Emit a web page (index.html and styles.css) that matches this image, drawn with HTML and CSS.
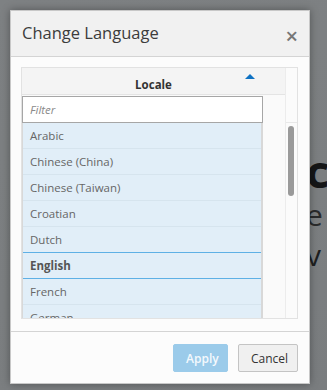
FILE: index.html
```html
<!DOCTYPE html>
<html lang="en">
<head>
    <meta charset="UTF-8">
    <meta name="viewport" content="width=device-width, initial-scale=1.0">
    <title>Change Language</title>
    <link rel="stylesheet" href="styles.css">
</head>
<body>
    <!-- page behind the modal overlay -->
    <div class="backdrop">
        <span class="bg-text bg-big">Ce</span>
        <span class="bg-text bg-mid">e</span>
        <span class="bg-text bg-low">v</span>
    </div>

    <div class="dialog">
        <div class="dialog-header">
            <h1 class="dialog-title">Change Language</h1>
            <span class="close">&times;</span>
        </div>

        <div class="dialog-body">
            <div class="grid">
                <div class="grid-main">
                    <div class="grid-head">
                        <span class="head-label">Locale</span>
                        <span class="sort-arrow"></span>
                    </div>
                    <div class="filter-row">
                        <input class="filter" type="text" placeholder="Filter">
                    </div>
                    <ul class="rows">
                        <li>Arabic</li>
                        <li>Chinese (China)</li>
                        <li>Chinese (Taiwan)</li>
                        <li>Croatian</li>
                        <li>Dutch</li>
                        <li class="selected">English</li>
                        <li>French</li>
                        <li>German</li>
                    </ul>
                </div>
                <div class="grid-scroll">
                    <div class="scroll-top"></div>
                    <div class="thumb"></div>
                </div>
            </div>
        </div>

        <div class="dialog-footer">
            <button class="btn btn-apply">Apply</button>
            <button class="btn btn-cancel">Cancel</button>
        </div>
    </div>
</body>
</html>
```

FILE: styles.css
```css
body {
    margin: 0;
    padding: 0;
    width: 327px;
    height: 390px;
    overflow: hidden;
    font-family: "Open Sans", "Noto Sans", sans-serif;
    background-color: #7e8183;
    position: relative;
}
.backdrop {
    position: absolute;
    inset: 0;
    overflow: hidden;
    background: linear-gradient(160deg, #7e8183 0%, #7c7f81 60%, #7a7d7f 100%);
}
.bg-text {
    position: absolute;
    left: 306px;
    line-height: 1;
    font-family: "Open Sans", sans-serif;
    white-space: nowrap;
}
.bg-big {
    top: 157px;
    font-size: 36px;
    font-weight: 800;
    color: #151617;
}
.bg-mid {
    top: 200px;
    font-size: 30px;
    color: #2a2b2c;
}
.bg-low {
    top: 240px;
    font-size: 30px;
    color: #1e1f20;
}
.dialog {
    position: absolute;
    left: 10px;
    top: 10px;
    width: 298px;
    height: 372px;
    border: 1px solid #c8c8c8;
    background-color: #fcfcfc;
    box-shadow: 0 0 8px rgba(0, 0, 0, 0.35);
    display: flex;
    flex-direction: column;
}
.dialog-header {
    height: 45px;
    flex: none;
    background-color: #f1f1f1;
    border-bottom: 1px solid #d4d4d4;
    display: flex;
    align-items: center;
    justify-content: space-between;
    padding: 0 11px 0 11px;
}
.dialog-title {
    margin: 0;
    font-size: 16.5px;
    font-weight: 400;
    color: #3c3c3c;
    padding-bottom: 2px;
}
.close {
    font-size: 22px;
    color: #777;
    font-weight: 600;
    line-height: 1;
    padding-top: 2px;
}
.dialog-body {
    flex: 1;
    padding: 10px 11px 12px 10px;
    border-bottom: 1px solid #d4d4d4;
}
.grid {
    height: 250px;
    border: 1px solid #e2e2e2;
    background-color: #fafafa;
    display: flex;
    overflow: hidden;
}
.grid-main {
    width: 263px;
    flex: none;
}
.grid-head {
    height: 27px;
    background-color: #f4f4f4;
    border-bottom: 1px solid #e4e4e4;
    box-sizing: border-box;
    position: relative;
    display: flex;
    align-items: flex-end;
    justify-content: center;
}
.head-label {
    font-size: 11.5px;
    font-weight: 700;
    color: #333;
    padding-bottom: 2px;
}
.sort-arrow {
    position: absolute;
    right: 30px;
    top: 6px;
    width: 0;
    height: 0;
    border-left: 5px solid transparent;
    border-right: 5px solid transparent;
    border-bottom: 5px solid #0f72c3;
}
.filter-row {
    padding: 1px 22px 0 0;
    background-color: #fafafa;
}
.filter {
    display: block;
    width: 241px;
    height: 27px;
    box-sizing: border-box;
    border: 1px solid #a6a6a6;
    background-color: #fff;
    padding: 0 7px;
    font-family: "Open Sans", sans-serif;
    font-size: 11.5px;
    outline: none;
}
.filter::placeholder {
    color: #8a8a8a;
    font-style: italic;
}
.rows {
    list-style: none;
    margin: 0;
    padding: 0;
    width: 241px;
    box-sizing: border-box;
    border-left: 1px solid #d8d8d8;
    border-right: 2px solid #d8d8d8;
}
.rows li {
    height: 26px;
    box-sizing: border-box;
    border-bottom: 1px solid #d6e4ee;
    background-color: #e1eef8;
    padding: 0 0 0 7px;
    font-size: 11.5px;
    line-height: 25px;
    color: #666;
}
.rows li.selected {
    font-weight: 700;
    color: #555;
    border-top: 1px solid #5eb0e5;
    border-bottom: 1px solid #5eb0e5;
    margin-top: -1px;
    height: 27px;
}
.grid-scroll {
    flex: 1;
    border-left: 1px solid #ececec;
    background-color: #fbfbfb;
    position: relative;
}
.scroll-top {
    height: 54px;
    border-bottom: 1px solid #e8e8e8;
}
.thumb {
    position: absolute;
    left: 2px;
    top: 58px;
    width: 6px;
    height: 70px;
    border-radius: 3px;
    background-color: #9a9a9a;
}
.dialog-footer {
    height: 52px;
    flex: none;
    display: flex;
    align-items: center;
    justify-content: flex-end;
    gap: 10px;
    padding: 0 11px;
}
.btn {
    height: 28px;
    padding: 0 12px;
    border-radius: 2px;
    font-family: "Open Sans", sans-serif;
    font-size: 12px;
    cursor: pointer;
}
.btn-apply {
    width: 55px;
    background-color: #9bcbea;
    border: 1px solid #9bcbea;
    color: #f4f9fd;
    font-weight: 600;
}
.btn-cancel {
    width: 60px;
    background-color: #f0f0f0;
    border: 1px solid #c4c4c4;
    color: #333;
}
```
